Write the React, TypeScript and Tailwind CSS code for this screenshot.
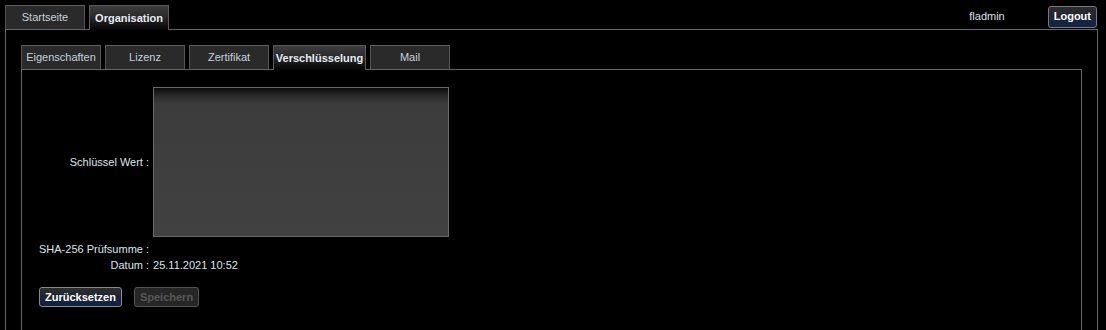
import React from "react";

const font = { fontFamily: '"Liberation Sans", Arial, sans-serif' };

function Tab({ label, active, wide }: { label: string; active?: boolean; wide?: boolean }) {
  if (active) {
    return (
      <div
        className={`relative z-10 mb-[-1px] h-[25px] ${wide ? "w-[93px]" : "w-[80px]"} border border-b-0 border-[#5a5a5a] bg-[linear-gradient(to_bottom,#3e3e3e_0%,#2a2a2a_45%,#050505_100%)] flex items-center justify-center whitespace-nowrap text-[11px] font-bold text-[#e4ecf4]`}
      >
        {label}
      </div>
    );
  }
  return (
    <div className="h-[24px] w-[80px] border border-b-0 border-[#555] border-t-[#5e5e5e] bg-[#2a2a2a] flex items-center justify-center text-[11px] text-[#c4d0dc]">
      {label}
    </div>
  );
}

export default function App() {
  return (
    <div className="w-[1106px] h-[330px] overflow-hidden bg-black flex flex-col" style={font}>
      {/* header */}
      <div className="flex items-end pl-[5px] pt-[5px] pr-[9px] h-[29px]">
        <div className="flex items-end gap-[4px]">
          <Tab label="Startseite" />
          <Tab label="Organisation" active />
        </div>
        <div className="ml-auto self-center flex items-center gap-[43px] mt-[-1px]">
          <span className="text-[11px] text-[#d8e0ea]">fladmin</span>
          <button className="h-[22px] px-[5px] rounded-[3px] border border-[#7a7a7a] bg-[linear-gradient(to_bottom,#2c2c2c_0%,#1e2636_50%,#0e2448_100%)] text-[11px] font-bold text-white">
            Logout
          </button>
        </div>
      </div>

      {/* outer frame */}
      <div className="ml-[5px] w-[1093px] flex-1 border border-b-0 border-[#666] px-[15px] pt-[15px] flex flex-col">
        <div className="flex items-end gap-[4px] pl-0">
          <Tab label="Eigenschaften" />
          <Tab label="Lizenz" />
          <Tab label="Zertifikat" />
          <Tab label="Verschlüsselung" active wide />
          <Tab label="Mail" />
        </div>
        <div className="flex-1 border border-b-0 border-[#666] pl-[17px] pt-[17px]">
          <div className="grid grid-cols-[auto_auto_1fr] gap-x-[4px] items-center text-[11px] text-[#dce4ec]">
            <span className="text-right whitespace-nowrap">Schlüssel Wert :</span>
            <div className="w-[296px] h-[150px] border border-[#6a6a6a] bg-[linear-gradient(to_bottom,#0a0a0a_0px,#2a2a2a_8px,#3c3c3c_16px,#414141_100%)]" />
            <span />
            <span className="text-right whitespace-nowrap mt-[4px] h-[16px] leading-[16px]">SHA-256 Prüfsumme :</span>
            <span className="mt-[4px] h-[16px]" />
            <span />
            <span className="text-right whitespace-nowrap h-[16px] leading-[16px]">Datum :</span>
            <span className="whitespace-nowrap h-[16px] leading-[16px]">25.11.2021 10:52</span>
            <span />
          </div>
          <div className="flex gap-[12px] mt-[14px]">
            <button className="h-[20px] px-[5px] rounded-[3px] border border-[#8a8a8a] bg-[linear-gradient(to_bottom,#2e2e2e_0%,#1c2434_50%,#0c2248_100%)] text-[11px] font-bold text-white">
              Zurücksetzen
            </button>
            <button className="h-[20px] px-[5px] rounded-[3px] border border-[#555] bg-[#262626] text-[11px] font-bold text-[#585858]">
              Speichern
            </button>
          </div>
        </div>
      </div>
    </div>
  );
}
